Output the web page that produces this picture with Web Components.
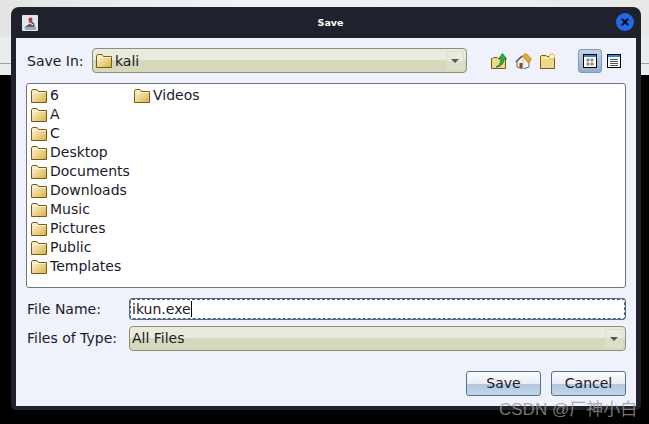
<!DOCTYPE html>
<html>
<head>
<meta charset="utf-8">
<style>
    html, body { margin: 0; height: 100%; }
    body {
        width: 649px;
        height: 424px;
        overflow: hidden;
        position: relative;
        font-family: "DejaVu Sans", sans-serif;
        background:
            linear-gradient(#000, #000) 0 75px / 100% 349px no-repeat,
            linear-gradient(#9aa2a8, #9aa2a8) 0 63px / 100% 1px no-repeat,
            linear-gradient(#e9edf0, #e9edf0) 0 37px / 100% 38px no-repeat,
            linear-gradient(90deg, #e4e4e4, #f4f4f4 40%, #e8e8e8);
    }
</style>
</head>
<body>
<save-dialog>
    <span slot="title">Save</span>

    <dialog-row slot="top">
        <span slot="label">Save In:</span>
        <combo-box icon>kali</combo-box>
        <tool-icons slot="after"></tool-icons>
    </dialog-row>

    <file-list slot="list">
        <file-row>6</file-row>
        <file-row>A</file-row>
        <file-row>C</file-row>
        <file-row>Desktop</file-row>
        <file-row>Documents</file-row>
        <file-row>Downloads</file-row>
        <file-row>Music</file-row>
        <file-row>Pictures</file-row>
        <file-row>Public</file-row>
        <file-row>Templates</file-row>
        <file-row>Videos</file-row>
    </file-list>

    <dialog-form slot="form">
        <span slot="name-label">File Name:</span>
        <name-field slot="name">ikun.exe</name-field>
        <span slot="type-label">Files of Type:</span>
        <combo-box slot="type">All Files</combo-box>
    </dialog-form>

    <push-button slot="actions">Save</push-button>
    <push-button slot="actions">Cancel</push-button>
</save-dialog>
<water-mark>CSDN @厂神小白</water-mark>

<script>
    const FOLDER = `
        <svg width="16" height="14" viewBox="0 0 16 14">
            <defs>
                <linearGradient id="f" x1="0" y1="0" x2="1" y2="1">
                    <stop offset="0" stop-color="#fffbe6"/>
                    <stop offset="1" stop-color="#d9b040"/>
                </linearGradient>
            </defs>
            <path d="M.5 13.5V2L1.5 .5H6L7.5 2.5H15.5V13.5Z" fill="url(#f)" stroke="#7a5c10"/>
            <path d="M1 3.5H15" stroke="#fff6c8"/>
        </svg>`;

    class SaveDialog extends HTMLElement {
        constructor() {
            super();
            this.attachShadow({ mode: 'open' });
            this.shadowRoot.innerHTML = `
                <style>
                    :host {
                        display: flex;
                        flex-direction: column;
                        box-sizing: border-box;
                        width: 630px;
                        height: 403px;
                        margin: 7px 0 0 11px;
                        padding: 0 5px 4px;
                        background: #1f222d;
                        border-radius: 8px 8px 5px 5px;
                        font: 14px "DejaVu Sans", sans-serif;
                        color: #1a1a2a;
                    }
                    header {
                        flex: none;
                        height: 31px;
                        display: flex;
                        align-items: center;
                        justify-content: center;
                        position: relative;
                        padding-left: 9px;
                        color: #fff;
                        font-size: 9.5px;
                        font-weight: bold;
                    }
                    .app {
                        position: absolute;
                        left: 6px;
                        top: 8px;
                    }
                    .close {
                        position: absolute;
                        right: 2px;
                        top: 6px;
                    }
                    main {
                        flex: 1;
                        display: flex;
                        flex-direction: column;
                        padding: 10px 10px 10px;
                        background: #eff2fa;
                    }
                    .actions {
                        display: flex;
                        justify-content: flex-end;
                        gap: 10px;
                        margin-top: 20px;
                    }
                </style>
                <header>
                    <svg class="app" width="16" height="16" viewBox="0 0 16 16">
                        <rect width="16" height="16" rx="1" fill="#dfe6ec"/>
                        <path d="M2 13 6 9 8 5 12 8 13 13Z" fill="#5c6068"/>
                        <path d="M3 12H14V15H3Z" fill="#a4a9b0"/>
                        <path d="M4 10 8 8 11 10" stroke="#fff" fill="none"/>
                        <circle cx="8.5" cy="4.5" r="2" fill="#d8242c"/>
                    </svg>
                    <slot name="title"></slot>
                    <svg class="close" width="18" height="18" viewBox="0 0 18 18">
                        <circle cx="9" cy="9" r="9" fill="#2468e8"/>
                        <path d="M5.8 5.8 12.2 12.2M12.2 5.8 5.8 12.2" stroke="#0c1220" stroke-width="2.2"/>
                    </svg>
                </header>
                <main>
                    <slot name="top"></slot>
                    <slot name="list"></slot>
                    <slot name="form"></slot>
                    <div class="actions"><slot name="actions"></slot></div>
                </main>
            `;
        }
    }

    class DialogRow extends HTMLElement {
        constructor() {
            super();
            this.attachShadow({ mode: 'open' });
            this.shadowRoot.innerHTML = `
                <style>
                    :host {
                        display: flex;
                        align-items: center;
                        height: 25px;
                        margin: 0 0 10px 1px;
                    }
                    .label { flex: none; width: 65px; }
                    .combo { flex: none; width: 375px; }
                </style>
                <div class="label"><slot name="label"></slot></div>
                <div class="combo"><slot></slot></div>
                <slot name="after"></slot>
            `;
        }
    }

    class ComboBox extends HTMLElement {
        constructor() {
            super();
            this.attachShadow({ mode: 'open' });
            this.shadowRoot.innerHTML = `
                <style>
                    :host {
                        display: flex;
                        align-items: center;
                        box-sizing: border-box;
                        height: 25px;
                        padding: 0 2px 0 2px;
                        border: 1px solid #8c8f78;
                        border-radius: 4px;
                        background: linear-gradient(#e9ebdd 0 50%, #d6d9bb 50% 100%);
                    }
                    svg.folder { margin: 0 3px 0 1px; display: none; }
                    :host([icon]) svg.folder { display: block; }
                    .value { flex: 1; }
                    :host(:not([icon])) .value { padding-bottom: 2px; }
                    .arrow {
                        flex: none;
                        width: 18px;
                        height: 19px;
                        display: flex;
                        align-items: center;
                        justify-content: center;
                        box-sizing: border-box;
                        border: 1px solid #dcdec9;
                        border-radius: 2px;
                        background: linear-gradient(#e9ebdf 0 50%, #dcdfc8 50% 100%);
                    }
                    .arrow i {
                        border: 4px solid transparent;
                        border-top: 4px solid #55575c;
                        border-bottom: 0;
                    }
                </style>
                ${FOLDER.replace('<svg', '<svg class="folder"')}
                <div class="value"><slot></slot></div>
                <div class="arrow"><i></i></div>
            `;
        }
    }

    class ToolIcons extends HTMLElement {
        constructor() {
            super();
            this.attachShadow({ mode: 'open' });
            this.shadowRoot.innerHTML = `
                <style>
                    :host {
                        display: flex;
                        align-items: center;
                        margin-left: 24px;
                    }
                    svg { display: block; flex: none; }
                    .tools { display: flex; gap: 8px; }
                    .toggle {
                        box-sizing: border-box;
                        width: 24px;
                        height: 24px;
                        margin-left: 22px;
                        display: flex;
                        align-items: center;
                        justify-content: center;
                        border: 1px solid #7f9ab8;
                        border-radius: 3px;
                        background: linear-gradient(#c3d2e4, #95aecb);
                    }
                    .list { margin-left: 5px; }
                </style>
                <div class="tools">
                    <svg width="16" height="16" viewBox="0 0 16 16">
                        <path d="M.5 15.5V5.5H1.5L2.5 4.5H6L7 5.5H14.5V15.5Z" fill="#ecd98c" stroke="#7a5c10"/>
                        <path d="M5 14C8 13 10 10 10 6H7.5L11.5 .5 15.5 6H13C13 10 10 14 5 14Z" fill="#2fae3c" stroke="#14701f" stroke-width=".8"/>
                    </svg>
                    <svg width="17" height="16" viewBox="0 0 17 16">
                        <path d="M2 8V14L8 16 14 14V8L8 3Z" fill="#f2f2f0" stroke="#6a6a70"/>
                        <path d="M8 5V16" stroke="#c4c4c8"/>
                        <path d="M.8 9 7 3" stroke="#55555c" stroke-width="1.4"/>
                        <path d="M6 4 11 .5 16.5 6 13.5 10 8 3.5Z" fill="#eda92c" stroke="#a06a10" stroke-width=".7"/>
                        <rect x="4.5" y="10" width="3" height="5" fill="#8a4c18"/>
                    </svg>
                    <svg width="16" height="16" viewBox="0 0 16 16">
                        <path d="M.5 15.5V3.5L1.5 2.5H6L7 3.5H14.5V15.5Z" fill="#ecd98c" stroke="#7a5c10"/>
                        <path d="M1 5H10" stroke="#fff6c8"/>
                        <circle cx="12" cy="3.5" r="2.6" fill="#fffbd8" stroke="#e8b830"/>
                    </svg>
                </div>
                <div class="toggle">
                    <svg width="14" height="14" viewBox="0 0 14 14">
                        <rect x=".5" y=".5" width="13" height="13" fill="#fff" stroke="#000"/>
                        <rect x="1" y="1" width="12" height="2" fill="#2f84e0"/>
                        <path d="M4 5H6V7H4ZM8 5H10V7H8ZM4 9H6V11H4ZM8 9H10V11H8Z" fill="none" stroke="#555" stroke-width=".8"/>
                    </svg>
                </div>
                <svg class="list" width="14" height="14" viewBox="0 0 14 14">
                    <rect x=".5" y=".5" width="13" height="13" fill="#fff" stroke="#000"/>
                    <rect x="1" y="1" width="12" height="2" fill="#2f84e0"/>
                    <path d="M3 5.5H11M3 7.5H11M3 9.5H11M3 11.5H11" stroke="#555"/>
                </svg>
            `;
        }
    }

    class FileList extends HTMLElement {
        constructor() {
            super();
            this.attachShadow({ mode: 'open' });
            this.shadowRoot.innerHTML = `
                <style>
                    :host {
                        display: grid;
                        grid-template-rows: repeat(10, 19px);
                        grid-auto-flow: column;
                        grid-auto-columns: 103px;
                        box-sizing: border-box;
                        height: 205px;
                        padding: 2px 4px;
                        background: #fff;
                        border: 1px solid #70747c;
                        border-radius: 3px;
                    }
                </style>
                <slot></slot>
            `;
        }
    }

    class FileRow extends HTMLElement {
        constructor() {
            super();
            this.attachShadow({ mode: 'open' });
            this.shadowRoot.innerHTML = `
                <style>
                    :host {
                        display: flex;
                        align-items: center;
                        gap: 3px;
                        white-space: nowrap;
                    }
                    svg { flex: none; }
                    span { padding-bottom: 2px; }
                </style>
                ${FOLDER}
                <span><slot></slot></span>
            `;
        }
    }

    class DialogForm extends HTMLElement {
        constructor() {
            super();
            this.attachShadow({ mode: 'open' });
            this.shadowRoot.innerHTML = `
                <style>
                    :host {
                        display: grid;
                        grid-template-columns: 103px 1fr;
                        grid-template-rows: 22px 25px;
                        row-gap: 6px;
                        align-items: center;
                        margin-top: 10px;
                    }
                    .label { padding-left: 1px; }
                    .type { padding-bottom: 2px; }
                </style>
                <div class="label"><slot name="name-label"></slot></div>
                <slot name="name"></slot>
                <div class="label type"><slot name="type-label"></slot></div>
                <slot name="type"></slot>
            `;
        }
    }

    class NameField extends HTMLElement {
        constructor() {
            super();
            this.attachShadow({ mode: 'open' });
            this.shadowRoot.innerHTML = `
                <style>
                    :host {
                        display: flex;
                        align-items: center;
                        box-sizing: border-box;
                        height: 22px;
                        padding: 0 2px;
                        background: #fff;
                        border: 1px solid #5f6a78;
                        border-radius: 3px;
                        outline: 1px dashed #3a5f92;
                        outline-offset: -2px;
                    }
                    i {
                        width: 1px;
                        height: 16px;
                        background: #000;
                    }
                </style>
                <slot></slot><i></i>
            `;
        }
    }

    class PushButton extends HTMLElement {
        constructor() {
            super();
            this.attachShadow({ mode: 'open' });
            this.shadowRoot.innerHTML = `
                <style>
                    :host {
                        display: flex;
                        align-items: center;
                        justify-content: center;
                        box-sizing: border-box;
                        width: 75px;
                        height: 25px;
                        padding-bottom: 2px;
                        border: 1px solid #4f7396;
                        border-radius: 3px;
                        background: linear-gradient(#fbfcfe, #e9eef5 50%, #b2c8e0 50%, #c4d4e6);
                    }
                </style>
                <slot></slot>
            `;
        }
    }

    class WaterMark extends HTMLElement {
        constructor() {
            super();
            this.attachShadow({ mode: 'open' });
            this.shadowRoot.innerHTML = `
                <style>
                    :host {
                        position: absolute;
                        left: 499px;
                        top: 395px;
                        font: 17px "Liberation Sans", "Noto Sans CJK SC", sans-serif;
                        color: rgba(150, 150, 150, .8);
                        white-space: nowrap;
                    }
                </style>
                <slot></slot>
            `;
        }
    }

    customElements.define('save-dialog', SaveDialog);
    customElements.define('dialog-row', DialogRow);
    customElements.define('combo-box', ComboBox);
    customElements.define('tool-icons', ToolIcons);
    customElements.define('file-list', FileList);
    customElements.define('file-row', FileRow);
    customElements.define('dialog-form', DialogForm);
    customElements.define('name-field', NameField);
    customElements.define('push-button', PushButton);
    customElements.define('water-mark', WaterMark);
</script>
</body>
</html>
